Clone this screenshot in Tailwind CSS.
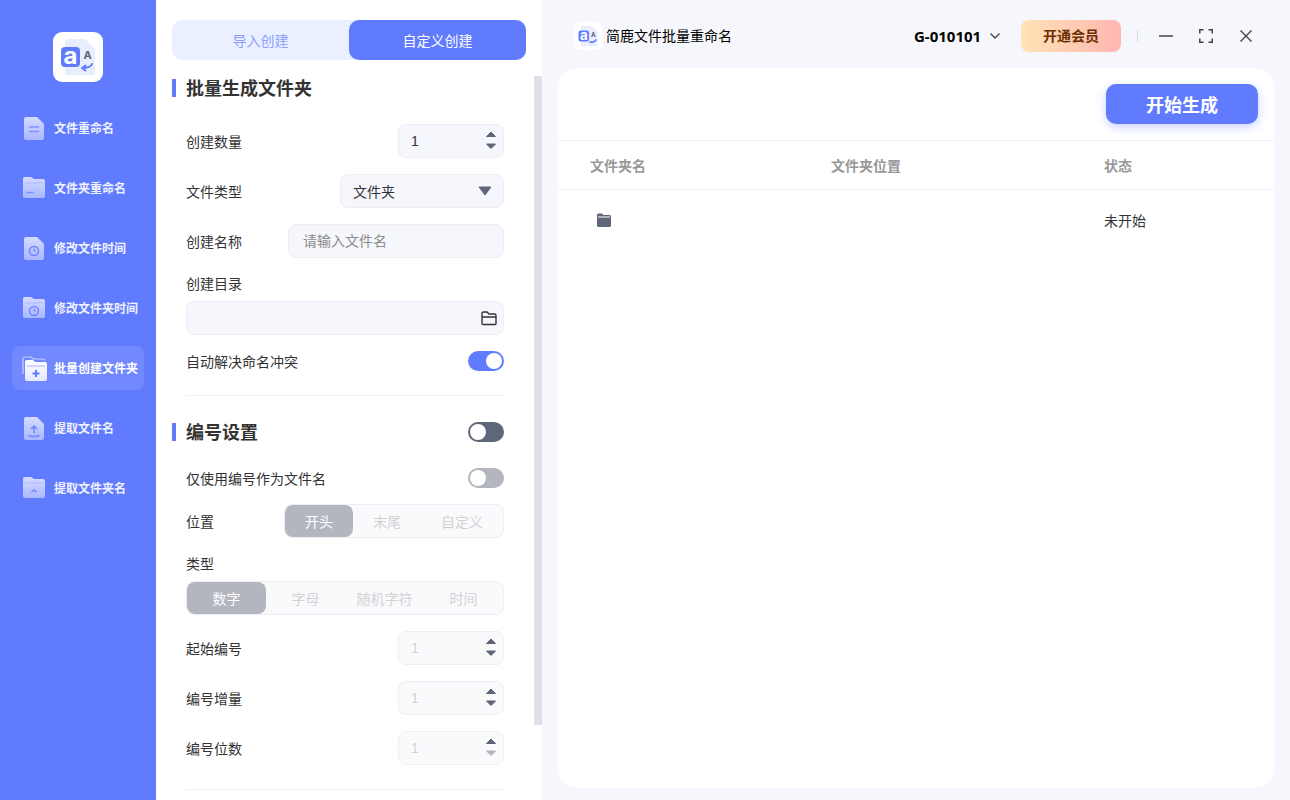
<!DOCTYPE html>
<html lang="zh-CN">

<head>
    <meta charset="UTF-8">
    <title>简鹿文件批量重命名</title>
    <script src="https://cdn.jsdelivr.net/npm/@tailwindcss/browser@4"></script>
</head>

<body class="h-[800px] w-[1290px] overflow-hidden flex bg-[#f6f7fc] text-[14px] text-[#333] font-['Inter','Noto_Sans_CJK_SC',sans-serif]">
    <svg class="absolute w-0 h-0">
        <defs>
            <linearGradient id="soft" x1="0" y1="0" x2="0" y2="1">
                <stop offset="0" stop-color="#d5dcff" />
                <stop offset="1" stop-color="#a9b7ff" />
            </linearGradient>
            <linearGradient id="bright" x1="0" y1="0" x2="0" y2="1">
                <stop offset="0" stop-color="#ffffff" />
                <stop offset="1" stop-color="#e3e8ff" />
            </linearGradient>
        </defs>
    </svg>

    <!-- sidebar -->
    <aside class="w-[156px] h-full shrink-0 bg-[#617bff] flex flex-col items-center pt-8">
        <div class="w-[50px] h-[50px] rounded-[9px] bg-white">
            <svg viewBox="0 0 50 50" class="w-[50px] h-[50px]">
                <path d="M15 7h17l10 10v23a3 3 0 0 1-3 3H15a3 3 0 0 1-3-3V10a3 3 0 0 1 3-3z" fill="#e9eeff" />
                <rect x="8" y="15" width="19" height="20" rx="4" fill="#617bff" />
                <text x="17.500" y="32" text-anchor="middle" font-size="24" font-weight="700" fill="#fff" font-family="Inter">a</text>
                <text x="34.500" y="27" text-anchor="middle" font-size="11" font-weight="700" fill="#5d6478" font-family="Inter">A</text>
                <path d="M39 32c-1 3-4 4-10 4m0 0l3.500-2.500M29 36l3.500 2.500" fill="none" stroke="#617bff" stroke-width="2" stroke-linecap="round" />
            </svg>
        </div>
        <nav class="mt-6 w-[132px] flex flex-col gap-4 text-[12px] font-bold text-white/90">
            <a class="h-11 flex items-center pl-[10px] gap-[6px]">
                <svg viewBox="0 0 26 26" class="w-[26px] h-[26px]">
                    <path d="M4 2h11l7 7v14a2 2 0 0 1-2 2H4a2 2 0 0 1-2-2V4a2 2 0 0 1 2-2z" fill="url(#soft)" />
                    <path d="M7 12h10M7 16.500h10" stroke="#7d91ff" stroke-width="1.500" />
                </svg>
                <span class="pt-[2px]">文件重命名</span>
            </a>
            <a class="h-11 flex items-center pl-[10px] gap-[6px]">
                <svg viewBox="0 0 26 26" class="w-[26px] h-[26px]">
                    <path d="M3 2h6l3 2h9a2 2 0 0 1 2 2v15a2 2 0 0 1-2 2H3a2 2 0 0 1-2-2V4a2 2 0 0 1 2-2z" fill="url(#soft)" />
                    <path d="M3 8h18" stroke="#b6c2ff" stroke-width="1.500" />
                    <path d="M4 17.500h8" stroke="#7d91ff" stroke-width="1.500" />
                </svg>
                <span class="pt-[2px]">文件夹重命名</span>
            </a>
            <a class="h-11 flex items-center pl-[10px] gap-[6px]">
                <svg viewBox="0 0 26 26" class="w-[26px] h-[26px]">
                    <path d="M4 2h11l7 7v14a2 2 0 0 1-2 2H4a2 2 0 0 1-2-2V4a2 2 0 0 1 2-2z" fill="url(#soft)" />
                    <circle cx="12" cy="16" r="4.500" fill="none" stroke="#6f85ff" stroke-width="1.500" />
                    <path d="M12 13.500v2.500h2" fill="none" stroke="#6f85ff" />
                </svg>
                <span class="pt-[2px]">修改文件时间</span>
            </a>
            <a class="h-11 flex items-center pl-[10px] gap-[6px]">
                <svg viewBox="0 0 26 26" class="w-[26px] h-[26px]">
                    <path d="M3 2h6l3 2h9a2 2 0 0 1 2 2v15a2 2 0 0 1-2 2H3a2 2 0 0 1-2-2V4a2 2 0 0 1 2-2z" fill="url(#soft)" />
                    <path d="M3 8h18" stroke="#b6c2ff" stroke-width="1.500" />
                    <circle cx="12" cy="16" r="4.500" fill="none" stroke="#6f85ff" stroke-width="1.500" />
                    <path d="M12 13.500v2.500h2" fill="none" stroke="#6f85ff" />
                </svg>
                <span class="pt-[2px]">修改文件夹时间</span>
            </a>
            <a class="h-11 flex items-center pl-[10px] gap-[6px] rounded-lg bg-white/10 text-white">
                <svg viewBox="0 0 26 26" class="w-[26px] h-[26px]">
                    <path d="M1 19V4a2 2 0 0 1 2-2h6l2 2h10a2 2 0 0 1 2 1.500" fill="none" stroke="#c7d0ff" stroke-width="1.200" />
                    <path d="M5 5h6l2 2h10a2 2 0 0 1 2 2v15a2 2 0 0 1-2 2H5a2 2 0 0 1-2-2V7a2 2 0 0 1 2-2z" fill="url(#bright)" />
                    <path d="M5 11h18" stroke="#c3cdff" stroke-width="1.500" />
                    <path d="M10.500 18.500h7M14 15v7" stroke="#617bff" stroke-width="2" />
                </svg>
                <span class="pt-[2px]">批量创建文件夹</span>
            </a>
            <a class="h-11 flex items-center pl-[10px] gap-[6px]">
                <svg viewBox="0 0 26 26" class="w-[26px] h-[26px]">
                    <path d="M4 2h11l7 7v14a2 2 0 0 1-2 2H4a2 2 0 0 1-2-2V4a2 2 0 0 1 2-2z" fill="url(#soft)" />
                    <path d="M12 18v-7m-3 3l3-3 3 3M6.500 20.500c3 1 8 1 11 0" fill="none" stroke="#6f85ff" stroke-width="1.500" />
                </svg>
                <span class="pt-[2px]">提取文件名</span>
            </a>
            <a class="h-11 flex items-center pl-[10px] gap-[6px]">
                <svg viewBox="0 0 26 26" class="w-[26px] h-[26px]">
                    <path d="M3 2h6l3 2h9a2 2 0 0 1 2 2v15a2 2 0 0 1-2 2H3a2 2 0 0 1-2-2V4a2 2 0 0 1 2-2z" fill="url(#soft)" />
                    <path d="M3 8h18" stroke="#b6c2ff" stroke-width="1.500" />
                    <path d="M9.500 17l2.500-2 2.500 2" fill="none" stroke="#6f85ff" stroke-width="1.500" />
                </svg>
                <span class="pt-[2px]">提取文件夹名</span>
            </a>
        </nav>
    </aside>

    <!-- settings panel -->
    <section class="relative w-[386px] h-full shrink-0 bg-white overflow-hidden">
        <div class="absolute right-0 top-[76px] w-2 h-[649px] bg-[#e0e0ea]"></div>

        <div class="pt-5 pl-4 pr-4">
            <div class="h-10 flex rounded-[10px] bg-[#eaf0ff]">
                <div class="w-1/2 flex items-center justify-center text-[#8c9dff]">导入创建</div>
                <div class="w-1/2 flex items-center justify-center rounded-[10px] bg-[#617bff] text-white">自定义创建</div>
            </div>
        </div>

        <div class="pl-4 pr-[38px]">
            <h2 class="mt-[18px] h-5 flex items-center gap-[10px] text-[18px] font-bold leading-5">
                <span class="w-1 h-[18px] bg-[#617bff]"></span><span class="pt-[2px]">批量生成文件夹</span>
            </h2>

            <div class="pl-[14px]">
                <div class="mt-[26px] h-[34px] flex items-center justify-between">
                    <span>创建数量</span>
                    <div class="w-[106px] h-[34px] flex items-center justify-between pl-3 pr-[6px] rounded-lg border border-[#eceef4] bg-[#f6f7fc]">
                        <span class="font-['Liberation_Sans']">1</span>
                        <svg viewBox="0 0 12 20" class="w-3 h-5"><path d="M6 1L10.500 5.500H1.500zM6 17.500L1.500 13H10.500z" fill="#5f6679" stroke="#5f6679" stroke-linejoin="round" /></svg>
                    </div>
                </div>
                <div class="mt-4 h-[34px] flex items-center justify-between">
                    <span>文件类型</span>
                    <div class="w-[164px] h-[34px] flex items-center justify-between pl-3 pr-[11px] rounded-lg border border-[#eceef4] bg-[#f6f7fc]">
                        <span>文件夹</span>
                        <svg viewBox="0 0 14 10" class="w-[14px] h-[10px]"><path d="M1 1h12L7 9z" fill="#5f6679" stroke="#5f6679" stroke-linejoin="round" /></svg>
                    </div>
                </div>
                <div class="mt-4 h-[34px] flex items-center justify-between">
                    <span>创建名称</span>
                    <div class="w-[216px] h-[34px] flex items-center pl-[14px] pb-[2px] rounded-lg border border-[#eceef4] bg-[#f6f7fc] text-[#8a8a8a]">请输入文件名</div>
                </div>
                <div class="mt-4 h-5 leading-5">创建目录</div>
                <div class="mt-[7px] h-[34px] flex items-center justify-end pr-[6px] rounded-lg border border-[#eceef4] bg-[#f6f7fc]">
                    <svg viewBox="0 0 16 16" class="w-4 h-4"><path d="M1 13.500v-10a1.500 1.500 0 0 1 1.500-1.500h3.500l2 2h5.500a1.500 1.500 0 0 1 1.500 1.500v8a1 1 0 0 1-1 1h-12a1 1 0 0 1-1-1zM1 7h14" fill="none" stroke="#333" stroke-width="1.400" /></svg>
                </div>
                <div class="mt-4 h-5 flex items-center justify-between">
                    <span>自动解决命名冲突</span>
                    <div class="w-9 h-5 rounded-full bg-[#617bff] flex justify-end items-center px-[2px]"><span class="w-4 h-4 rounded-full bg-white"></span></div>
                </div>
                <div class="mt-6 h-px bg-[#f0f1f4]"></div>
            </div>

            <div class="mt-[26px] h-5 flex items-center justify-between">
                <h2 class="flex items-center gap-[10px] text-[18px] font-bold leading-5">
                    <span class="w-1 h-[18px] bg-[#617bff]"></span><span class="pt-[2px]">编号设置</span>
                </h2>
                <div class="w-9 h-5 rounded-full bg-[#5f6679] flex items-center px-[2px]"><span class="w-4 h-4 rounded-full bg-white"></span></div>
            </div>

            <div class="pl-[14px]">
                <div class="mt-[26px] h-5 flex items-center justify-between">
                    <span>仅使用编号作为文件名</span>
                    <div class="w-9 h-5 rounded-full bg-[#b3b6bf] flex items-center px-[2px]"><span class="w-4 h-4 rounded-full bg-white"></span></div>
                </div>
                <div class="mt-4 h-[34px] flex items-center justify-between">
                    <span>位置</span>
                    <div class="w-[220px] h-[34px] flex rounded-lg border border-[#eceef4] bg-[#fafafd] text-[#d2d2d4]">
                        <span class="w-[68px] flex items-center justify-center rounded-lg bg-[#b3b6bf] text-white">开头</span>
                        <span class="w-[68px] flex items-center justify-center">末尾</span>
                        <span class="w-[82px] flex items-center justify-center">自定义</span>
                    </div>
                </div>
                <div class="mt-4 h-5 leading-5">类型</div>
                <div class="mt-[7px] h-[34px] grid grid-cols-4 rounded-lg border border-[#eceef4] bg-[#fafafd] text-[#d2d2d4]">
                    <span class="flex items-center justify-center rounded-lg bg-[#b3b6bf] text-white">数字</span>
                    <span class="flex items-center justify-center">字母</span>
                    <span class="flex items-center justify-center">随机字符</span>
                    <span class="flex items-center justify-center">时间</span>
                </div>
                <div class="mt-4 h-[34px] flex items-center justify-between">
                    <span>起始编号</span>
                    <div class="w-[106px] h-[34px] flex items-center justify-between pl-3 pr-[6px] rounded-lg border border-[#eceef4] bg-[#fafafd] text-[#d2d2d4]">
                        <span class="font-['Liberation_Sans']">1</span>
                        <svg viewBox="0 0 12 20" class="w-3 h-5"><path d="M6 1L10.500 5.500H1.500zM6 17.500L1.500 13H10.500z" fill="#5f6679" stroke="#5f6679" stroke-linejoin="round" /></svg>
                    </div>
                </div>
                <div class="mt-4 h-[34px] flex items-center justify-between">
                    <span>编号增量</span>
                    <div class="w-[106px] h-[34px] flex items-center justify-between pl-3 pr-[6px] rounded-lg border border-[#eceef4] bg-[#fafafd] text-[#d2d2d4]">
                        <span class="font-['Liberation_Sans']">1</span>
                        <svg viewBox="0 0 12 20" class="w-3 h-5"><path d="M6 1L10.500 5.500H1.500zM6 17.500L1.500 13H10.500z" fill="#5f6679" stroke="#5f6679" stroke-linejoin="round" /></svg>
                    </div>
                </div>
                <div class="mt-4 h-[34px] flex items-center justify-between">
                    <span>编号位数</span>
                    <div class="w-[106px] h-[34px] flex items-center justify-between pl-3 pr-[6px] rounded-lg border border-[#eceef4] bg-[#fafafd] text-[#d2d2d4]">
                        <span class="font-['Liberation_Sans']">1</span>
                        <svg viewBox="0 0 12 20" class="w-3 h-5"><path d="M6 1L10.500 5.500H1.500z" fill="#5f6679" stroke="#5f6679" stroke-linejoin="round" /><path d="M6 17.500L1.500 13H10.500z" fill="#b3b6bf" stroke="#b3b6bf" stroke-linejoin="round" /></svg>
                    </div>
                </div>
                <div class="mt-6 h-px bg-[#f0f1f4]"></div>
            </div>
        </div>
    </section>

    <!-- main -->
    <main class="flex-1 h-full flex flex-col px-4 pb-3">
        <header class="h-[68px] shrink-0 flex items-center pt-1">
            <div class="w-7 h-7 ml-4 rounded-md bg-white">
                <svg viewBox="0 0 50 50" class="w-7 h-7">
                    <path d="M15 7h17l10 10v23a3 3 0 0 1-3 3H15a3 3 0 0 1-3-3V10a3 3 0 0 1 3-3z" fill="#e9eeff" />
                    <rect x="8" y="15" width="19" height="20" rx="4" fill="#617bff" />
                    <text x="17.500" y="32" text-anchor="middle" font-size="24" font-weight="700" fill="#fff" font-family="Inter">a</text>
                    <text x="34.500" y="27" text-anchor="middle" font-size="11" font-weight="700" fill="#5d6478" font-family="Inter">A</text>
                    <path d="M39 32c-1 3-4 4-10 4" fill="none" stroke="#617bff" stroke-width="3" stroke-linecap="round" />
                </svg>
            </div>
            <span class="ml-1 pb-[2px] text-black">简鹿文件批量重命名</span>
            <span class="ml-[182px] w-[68px] text-[15px] font-bold text-black font-['Noto_Sans','Noto_Sans_CJK_SC',sans-serif]">G-010101</span>
            <svg viewBox="0 0 10 6" class="ml-2 w-[10px] h-[6px]"><path d="M.5 .5L5 5 9.500 .5" fill="none" stroke="#444" stroke-width="1.300" /></svg>
            <div class="ml-[21px] w-[100px] h-8 pb-[2px] flex items-center justify-center rounded-lg bg-gradient-to-r from-[#ffe4b6] to-[#ffb5b0] font-bold text-[#6b2f00]">开通会员</div>
            <span class="ml-4 w-px h-3 bg-[#d9dbe2]"></span>
            <svg viewBox="0 0 14 14" class="ml-[21px] w-[14px] h-[14px]"><path d="M0 7h14" stroke="#444" stroke-width="1.500" /></svg>
            <svg viewBox="0 0 14 14" class="ml-[26px] w-[14px] h-[14px]"><path d="M.8 4.500V.8h3.700M9.500 .8h3.700v3.700M13.200 9.500v3.700H9.500M4.500 13.200H.8V9.500" fill="none" stroke="#444" stroke-width="1.500" /></svg>
            <svg viewBox="0 0 12 12" class="ml-[27px] w-3 h-3"><path d="M.5 .5l11 11M11.500 .5l-11 11" stroke="#444" stroke-width="1.400" /></svg>
        </header>

        <div class="flex-1 rounded-[20px] bg-white">
            <div class="h-[73px] flex items-start justify-end pt-4 pr-4 border-b border-[#f0f1f4]">
                <button class="w-[152px] h-10 pt-[2px] rounded-[10px] bg-[#617bff] text-white text-[18px] font-bold shadow-[0_3px_10px_rgba(97,123,255,0.35)]">开始生成</button>
            </div>
            <div class="h-[49px] flex items-center border-b border-[#f0f1f4] font-bold text-[#999]">
                <span class="ml-8 w-[241px]">文件夹名</span>
                <span class="w-[273px]">文件夹位置</span>
                <span>状态</span>
            </div>
            <div class="h-[60px] flex items-center">
                <span class="ml-[38px] w-[508px]">
                    <svg viewBox="0 0 16 16" class="w-4 h-4"><path d="M1 3a1.500 1.500 0 0 1 1.500-1.500h3.500l1.500 1.500h6A1.500 1.500 0 0 1 15 4.500v9a1.500 1.500 0 0 1-1.500 1.500h-11A1.500 1.500 0 0 1 1 13.500z" fill="#5f6679" /><path d="M2 5h12" stroke="#fff" /></svg>
                </span>
                <span class="pt-px">未开始</span>
            </div>
        </div>
    </main>
</body>

</html>
